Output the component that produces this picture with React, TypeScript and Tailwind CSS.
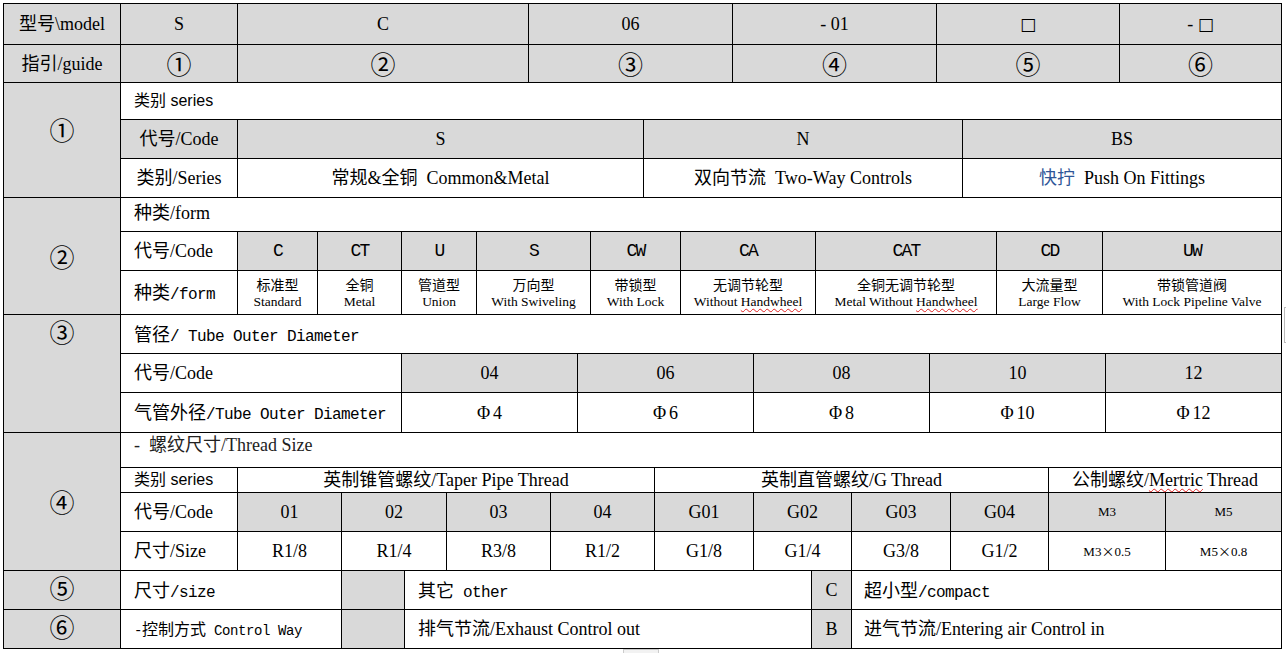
import { ReactNode } from "react";
import { twMerge } from "tailwind-merge";

const MONO = "font-['Liberation_Mono','Noto_Sans_CJK_SC',monospace] text-[16px] tracking-[-0.6px]";
const CJK = "font-['Noto_Sans_CJK_SC',sans-serif]";
const SANS = "font-['Liberation_Sans','Noto_Sans_CJK_SC',sans-serif] text-[16px]";
const WAVY = "underline decoration-wavy decoration-[#e02020] decoration-1 underline-offset-2";

function Cell({ className, gray, children }: { className?: string; gray?: boolean; children?: ReactNode }) {
  return (
    <div
      className={twMerge(
        "flex shrink-0 items-center justify-center whitespace-pre border-r border-b border-black leading-none",
        gray && "bg-[#d9d9d9]",
        className
      )}
    >
      {children}
    </div>
  );
}

// SimSun-like line: full-width CJK followed by half-width latin
function Mx({ cn, lat, size = "text-[18px]" }: { cn: string; lat: string; size?: string }) {
  return (
    <span className="whitespace-pre">
      <span className={twMerge(CJK, size)}>{cn}</span>
      <span className={MONO}>{lat}</span>
    </span>
  );
}

function Circ({ n }: { n: string }) {
  return <span className={twMerge(CJK, "text-[25px] leading-none")}>{n}</span>;
}

function Two({ cn, en }: { cn: string; en: ReactNode }) {
  return (
    <div className="flex flex-col items-center leading-[17px]">
      <span className={twMerge(CJK, "text-[14px]")}>{cn}</span>
      <span className="text-[13.5px]">{en}</span>
    </div>
  );
}

function Mul({ a, b }: { a: string; b: string }) {
  return (
    <span className="text-[13px]">
      {a}
      <span className={twMerge(CJK, "text-[13px]")}>×</span>
      {b}
    </span>
  );
}

const forms: { code: string; cn: string; en: ReactNode; w: string }[] = [
  { code: "C", cn: "标准型", en: "Standard", w: "w-[80px]" },
  { code: "CT", cn: "全铜", en: "Metal", w: "w-[84px]" },
  { code: "U", cn: "管道型", en: "Union", w: "w-[75px]" },
  { code: "S", cn: "万向型", en: "With Swiveling", w: "w-[114px]" },
  { code: "CW", cn: "带锁型", en: "With Lock", w: "w-[90px]" },
  {
    code: "CA",
    cn: "无调节轮型",
    en: (
      <>
        Without <span className={WAVY}>Handwheel</span>
      </>
    ),
    w: "w-[135px]",
  },
  {
    code: "CAT",
    cn: "全铜无调节轮型",
    en: (
      <>
        Metal Without <span className={WAVY}>Handwheel</span>
      </>
    ),
    w: "w-[181px]",
  },
  { code: "CD", cn: "大流量型", en: "Large Flow", w: "w-[106px]" },
  { code: "UW", cn: "带锁管道阀", en: "With Lock Pipeline Valve", w: "w-[179px]" },
];

const tubes = [
  { code: "04", d: "4" },
  { code: "06", d: "6" },
  { code: "08", d: "8" },
  { code: "10", d: "10" },
  { code: "12", d: "12" },
];

const threads = [
  { code: "01", size: "R1/8", w: "w-[104px]" },
  { code: "02", size: "R1/4", w: "w-[105px]" },
  { code: "03", size: "R3/8", w: "w-[104px]" },
  { code: "04", size: "R1/2", w: "w-[104px]" },
  { code: "G01", size: "G1/8", w: "w-[99px]" },
  { code: "G02", size: "G1/4", w: "w-[98px]" },
  { code: "G03", size: "G3/8", w: "w-[99px]" },
  { code: "G04", size: "G1/2", w: "w-[98px]" },
];

export default function App() {
  return (
    <div className="relative min-h-screen w-[1286px] bg-white text-black font-['Liberation_Serif','Noto_Sans_CJK_SC',serif] text-[18px]">
      <div className="ml-[3px] pt-[3px]">
        <div className="w-[1279px] border-l border-t border-black">
          {/* model row */}
          <div className="flex h-[41px]">
            <Cell gray className="w-[117px]">{"型号\\model"}</Cell>
            <Cell gray className="w-[117px]">S</Cell>
            <Cell gray className="w-[291px]">C</Cell>
            <Cell gray className="w-[204px]">06</Cell>
            <Cell gray className="w-[204px]">- 01</Cell>
            <Cell gray className="w-[183px]">
              <span className="font-['DejaVu_Sans',sans-serif] text-[17px]">□</span>
            </Cell>
            <Cell gray className="w-[162px]">
              - <span className="font-['DejaVu_Sans',sans-serif] text-[17px]">□</span>
            </Cell>
          </div>
          {/* guide row */}
          <div className="flex h-[38px]">
            <Cell gray className="w-[117px]">指引/guide</Cell>
            <Cell gray className="w-[117px]"><Circ n="①" /></Cell>
            <Cell gray className="w-[291px]"><Circ n="②" /></Cell>
            <Cell gray className="w-[204px]"><Circ n="③" /></Cell>
            <Cell gray className="w-[204px]"><Circ n="④" /></Cell>
            <Cell gray className="w-[183px]"><Circ n="⑤" /></Cell>
            <Cell gray className="w-[162px]"><Circ n="⑥" /></Cell>
          </div>

          {/* ① series */}
          <div className="flex">
            <Cell gray className="w-[117px] pb-[22px]"><Circ n="①" /></Cell>
            <div className="flex w-[1161px] flex-col">
              <Cell className="h-[37px] w-full justify-start pl-[13px]">
                <span className={SANS}>类别 series</span>
              </Cell>
              <div className="flex h-[39px]">
                <Cell gray className="w-[117px]">代号/Code</Cell>
                <Cell gray className="w-[406px]">S</Cell>
                <Cell gray className="w-[319px]">N</Cell>
                <Cell gray className="w-[319px]">BS</Cell>
              </div>
              <div className="flex h-[39px]">
                <Cell className="w-[117px]">类别/Series</Cell>
                <Cell className="w-[406px]">常规&amp;全铜  Common&amp;Metal</Cell>
                <Cell className="w-[319px]">双向节流  Two-Way Controls</Cell>
                <Cell className="w-[319px]">
                  <span className="text-[#2e5597]">快拧</span>  Push On Fittings
                </Cell>
              </div>
            </div>
          </div>

          {/* ② form */}
          <div className="flex">
            <Cell gray className="w-[117px]"><Circ n="②" /></Cell>
            <div className="flex w-[1161px] flex-col">
              <Cell className="h-[34px] w-full justify-start pb-[4px] pl-[13px]">种类/form</Cell>
              <div className="flex h-[39px]">
                <Cell className="w-[117px] justify-start pl-[13px]">代号/Code</Cell>
                {forms.map((f) => (
                  <Cell key={f.code} gray className={f.w}>
                    <span className="font-['Liberation_Mono',monospace] text-[18px] tracking-[-1.8px]">{f.code}</span>
                  </Cell>
                ))}
              </div>
              <div className="flex h-[44px]">
                <Cell className="w-[117px] justify-start pl-[13px]">
                  <Mx cn="种类" lat="/form" />
                </Cell>
                {forms.map((f) => (
                  <Cell key={f.code} className={f.w}>
                    <Two cn={f.cn} en={f.en} />
                  </Cell>
                ))}
              </div>
            </div>
          </div>

          {/* ③ tube */}
          <div className="flex">
            <Cell gray className="w-[117px] pb-[84px]"><Circ n="③" /></Cell>
            <div className="flex w-[1161px] flex-col">
              <Cell className="h-[39px] w-full justify-start pl-[13px]">
                <Mx cn="管径" lat="/ Tube Outer Diameter" />
              </Cell>
              <div className="flex h-[39px]">
                <Cell className="w-[281px] justify-start pl-[13px]">代号/Code</Cell>
                {tubes.map((t) => (
                  <Cell key={t.code} gray className="w-[176px]">{t.code}</Cell>
                ))}
              </div>
              <div className="flex h-[40px]">
                <Cell className="w-[281px] justify-start pl-[13px]">
                  <Mx cn="气管外径" lat="/Tube Outer Diameter" />
                </Cell>
                {tubes.map((t) => (
                  <Cell key={t.code} className="w-[176px]">
                    <span className="mr-[3px]">Φ</span>
                    {t.d}
                  </Cell>
                ))}
              </div>
            </div>
          </div>

          {/* ④ thread */}
          <div className="flex">
            <Cell gray className="w-[117px]"><Circ n="④" /></Cell>
            <div className="flex w-[1161px] flex-col">
              <Cell className="h-[35px] w-full justify-start pb-[10px] pl-[13px]">
                <span className="text-[#222]">-  螺纹尺寸/Thread Size</span>
              </Cell>
              <div className="flex h-[25px]">
                <Cell className="w-[117px] justify-start pl-[13px]">
                  <span className={SANS}>类别 series</span>
                </Cell>
                <Cell className="w-[417px]">英制锥管螺纹/Taper Pipe Thread</Cell>
                <Cell className="w-[394px]">英制直管螺纹/G Thread</Cell>
                <Cell className="w-[233px]">
                  <span>
                    公制螺纹/<span className={WAVY}>Mertric</span> Thread
                  </span>
                </Cell>
              </div>
              <div className="flex h-[39px]">
                <Cell className="w-[117px] justify-start pl-[13px]">代号/Code</Cell>
                {threads.map((t) => (
                  <Cell key={t.code} gray className={t.w}>{t.code}</Cell>
                ))}
                <Cell gray className="w-[117px] text-[13px]">M3</Cell>
                <Cell gray className="w-[116px] text-[13px]">M5</Cell>
              </div>
              <div className="flex h-[39px]">
                <Cell className="w-[117px] justify-start pl-[13px]">尺寸/Size</Cell>
                {threads.map((t) => (
                  <Cell key={t.code} className={t.w}>{t.size}</Cell>
                ))}
                <Cell className="w-[117px]"><Mul a="M3" b="0.5" /></Cell>
                <Cell className="w-[116px]"><Mul a="M5" b="0.8" /></Cell>
              </div>
            </div>
          </div>

          {/* ⑤ */}
          <div className="flex h-[39px]">
            <Cell gray className="w-[117px] pb-[6px]"><Circ n="⑤" /></Cell>
            <Cell className="w-[221px] justify-start pl-[13px]">
              <Mx cn="尺寸" lat="/size" />
            </Cell>
            <Cell gray className="w-[63px]" />
            <Cell className="w-[407px] justify-start pl-[13px]">
              <Mx cn="其它" lat=" other" />
            </Cell>
            <Cell gray className="w-[40px]">C</Cell>
            <Cell className="w-[430px] justify-start pl-[12px]">
              <Mx cn="超小型" lat="/compact" />
            </Cell>
          </div>

          {/* ⑥ */}
          <div className="flex h-[39px]">
            <Cell gray className="w-[117px] pb-[6px]"><Circ n="⑥" /></Cell>
            <Cell className="w-[221px] justify-start pl-[13px]">
              <span className="whitespace-pre">
                <span className="font-['Liberation_Mono',monospace] text-[14px] tracking-[-0.4px]">-</span>
                <span className={twMerge(CJK, "text-[16px]")}>控制方式</span>
                <span className="font-['Liberation_Mono',monospace] text-[14px] tracking-[-0.4px]"> Control Way</span>
              </span>
            </Cell>
            <Cell gray className="w-[63px]" />
            <Cell className="w-[407px] justify-start pl-[13px]">排气节流/Exhaust Control out</Cell>
            <Cell gray className="w-[40px]">B</Cell>
            <Cell className="w-[430px] justify-start pl-[12px]">进气节流/Entering air Control in</Cell>
          </div>
        </div>
      </div>

      {/* screenshot leftovers */}
      <div className="absolute left-[1284px] top-[307px] h-[36px] w-[2px] border-y border-l border-[#bbb]" />
      <div className="absolute left-[623px] top-[649px] h-[4px] w-[36px] border-x border-t border-[#ccc] bg-[#f2f2f2]" />
    </div>
  );
}
